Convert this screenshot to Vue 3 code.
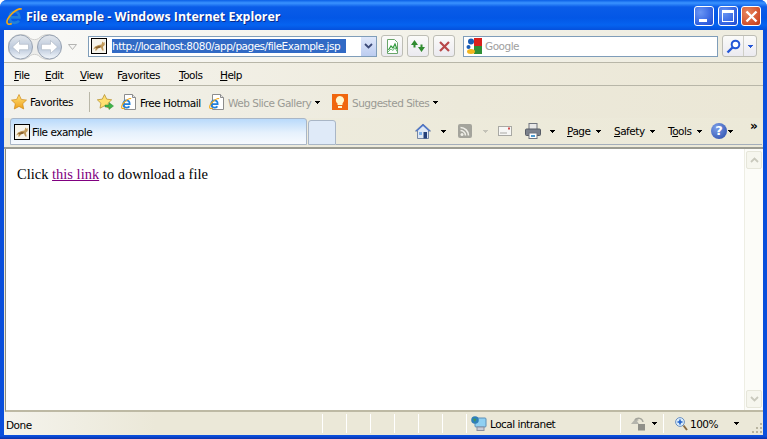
<script setup>
const menus = [
  { key: 'F', rest: 'ile', cls: 'm-file' },
  { key: 'E', rest: 'dit', cls: 'm-edit' },
  { key: 'V', rest: 'iew', cls: 'm-view' },
  { pre: 'F', key: 'a', rest: 'vorites', cls: 'm-fav' },
  { key: 'T', rest: 'ools', cls: 'm-tools' },
  { key: 'H', rest: 'elp', cls: 'm-help' }
];
const panes = [24, 24, 24, 24, 24, 24];
</script>

<template>
  <div class="window">
    <svg class="defs" width="0" height="0">
      <defs>
        <linearGradient id="orb" x1="0" y1="0" x2="0" y2="1">
          <stop offset="0" stop-color="#e4e8ed" />
          <stop offset="0.55" stop-color="#bcc9dc" />
          <stop offset="1" stop-color="#f4f8fc" />
        </linearGradient>
        <linearGradient id="starfill" x1="0" y1="0" x2="0" y2="1">
          <stop offset="0" stop-color="#ffe37a" />
          <stop offset="1" stop-color="#f0a019" />
        </linearGradient>
        <symbol id="ie" viewBox="0 0 16 16">
          <path d="M3 8.800h9.600c0-3.300-2-5.300-4.600-5.300S3.300 5.600 3.300 8.800s2 5.200 4.700 5.200c1.700 0 3.200-.6 4.300-1.800" fill="none" stroke="#1f7fdc" stroke-width="2.500" />
          <path d="M14.800 1.200C13 .2 9 2 5.600 5.400 2.200 8.800.2 12.800 1.400 14.600c.8 1 2.400.8 4-.1" fill="none" stroke="#f5a914" stroke-width="1.600" />
        </symbol>
        <symbol id="pageie" viewBox="0 0 16 16">
          <path d="M3.500.500h8l3 3v12h-11z" fill="#fff" stroke="#8c8c8c" />
          <path d="M11.500.500v3h3" fill="#e4e4e4" stroke="#8c8c8c" />
          <use href="#ie" x="0" y="4" width="11" height="11" />
        </symbol>
        <symbol id="cat" viewBox="0 0 16 16">
          <rect x="0.500" y="0.500" width="15" height="15" fill="#f6f3ea" stroke="#000" />
          <path d="M2 11.500l2-3 3.500-1.500 3-.5 .8-3 1.200 1.300 1.200-.8 0 3-1.800 1.700 .8 3.800h-1.500l-1.300-3-2.900.9-1.500 2.100H4l.8-2.300z" fill="#c19a5b" />
          <path d="M4 9.500l3.500-1.500 2.500.2-1 1.600-3.500.7z" fill="#8a6330" />
        </symbol>
        <symbol id="caret" viewBox="0 0 5 3">
          <path d="M0 0h5v1H4v1H3v1H2V2H1V1H0z" />
        </symbol>
      </defs>
    </svg>

    <header class="titlebar">
      <svg class="title-logo" width="17" height="17"><use href="#ie" /></svg>
      <span class="title-text">File example - Windows Internet Explorer</span>
      <div class="caption">
        <button class="cap cap-min"><i></i></button>
        <button class="cap cap-max"><i></i></button>
        <button class="cap cap-close">
          <svg width="13" height="13" viewBox="0 0 13 13"><path d="M1.500 1.500l10 10M11.500 1.500l-10 10" stroke="#fff" stroke-width="2.400" /></svg>
        </button>
      </div>
    </header>

    <div class="body">
      <div class="navbar">
        <div class="orbs">
          <svg width="56" height="28" viewBox="0 0 56 28">
            <path d="M12.500 1.500c5 0 8 2 10 4 2 1.500 6 1.500 8 0 2-2 5-4 10-4a12.500 12.500 0 0 1 0 25c-5 0-8-2-10-4-2-1.500-6-1.500-8 0-2 2-5 4-10 4a12.500 12.500 0 0 1 0-25z" fill="#ededeb" stroke="#d0d0ce" />
            <circle cx="12.500" cy="14" r="12" fill="url(#orb)" stroke="#97a2b2" />
            <circle cx="41.500" cy="14" r="12" fill="url(#orb)" stroke="#97a2b2" />
            <path d="M4.500 14l7-6.500v3.800H20.500v5.400h-9V20.500z" fill="#fff" stroke="#a8b2bf" stroke-width="0.600" />
            <path d="M49.500 14l-7-6.500v3.800H33.500v5.400h9V20.500z" fill="#fff" stroke="#a8b2bf" stroke-width="0.600" />
          </svg>
          <svg class="recent" width="9" height="6" viewBox="0 0 9 6"><path d="M.5.500h8L4.500 5.500z" fill="#f6f6f4" stroke="#b4b4b2" /></svg>
        </div>
        <div class="address">
          <svg class="fav16" width="16" height="16"><use href="#cat" /></svg>
          <span class="url">http://localhost:8080/app/pages/fileExample.jsp</span>
          <span class="addr-drop">
            <svg width="9" height="6" viewBox="0 0 9 6"><path d="M1 1l3.500 3.500L8 1" fill="none" stroke="#3c4a78" stroke-width="1.800" /></svg>
          </span>
        </div>
        <button class="tbtn b-compat">
          <svg width="15" height="15" viewBox="0 0 15 15">
            <path d="M2.500.500h7l3 3v11h-10z" fill="#fff" stroke="#6aa56a" />
            <path d="M3.500 11l2.500-4 2 2 2-4 2 5" fill="none" stroke="#2f9a3c" stroke-width="1.200" />
            <path d="M3 13l3-3 2 1.500 2-3 2 4" fill="none" stroke="#6fc07a" />
          </svg>
        </button>
        <button class="tbtn b-refresh">
          <svg width="16" height="14" viewBox="0 0 16 14">
            <path d="M1 6l3.500-5L8 6H5.500v2.500h-2V6z" fill="#2f8b2f" />
            <path d="M15 8l-3.500 5L8 8h2.500V5.500h2V8z" fill="#2f8b2f" />
          </svg>
        </button>
        <button class="tbtn b-stop">
          <svg width="11" height="11" viewBox="0 0 11 11"><path d="M1 1l9 9M10 1l-9 9" stroke="#b8484a" stroke-width="2.200" /></svg>
        </button>
        <div class="searchbox">
          <svg class="g-logo" width="16" height="16" viewBox="0 0 16 16">
            <path d="M8 0h8v8H8z" fill="#d8201c" />
            <path d="M8 8h8v8H8z" fill="#2f8f35" />
            <circle cx="5" cy="3.500" r="3" fill="#1a5cb4" />
            <circle cx="2.500" cy="9" r="2" fill="#1a5cb4" />
            <ellipse cx="5" cy="13.500" rx="4" ry="2.500" fill="#f2b51e" />
          </svg>
          <span class="google">Google</span>
        </div>
        <div class="searchbtn">
          <span class="s-go">
            <svg width="15" height="15" viewBox="0 0 15 15">
              <circle cx="9.500" cy="5.500" r="3.800" fill="#fff" stroke="#2456d6" stroke-width="2" />
              <path d="M6.500 8.500L1.500 13.500" stroke="#2456d6" stroke-width="2.400" />
            </svg>
          </span>
          <span class="s-drop">
            <svg width="5" height="3" fill="#2456d6"><use href="#caret" /></svg>
          </span>
        </div>
      </div>

      <nav class="menubar">
        <span v-for="m in menus" :key="m.cls" class="menu-item" :class="m.cls">{{ m.pre }}<u>{{ m.key }}</u>{{ m.rest }}</span>
      </nav>

      <div class="favbar">
        <svg class="star" width="16" height="16" viewBox="0 0 16 16"><path d="M8 .500l2.300 4.900 5.200.700-3.800 3.600 1 5.300L8 12.400l-4.700 2.600 1-5.300L.500 6.100l5.200-.700z" fill="url(#starfill)" stroke="#d08a18" stroke-width="0.700" /></svg>
        <span class="fav-label">Favorites</span>
        <span class="fav-sep"></span>
        <svg class="star-add" width="17" height="16" viewBox="0 0 17 16">
          <path d="M7.500.500l2.200 4.600 5 .700-3.600 3.400 .9 5L7.500 11.800 3 14.200l.9-5L.300 5.800l5-.700z" fill="#ffe070" stroke="#b0892a" stroke-width="0.700" />
          <path d="M8 11h4V8.500l4.500 3.500-4.500 3.500V13H8z" fill="#3fb44a" stroke="#2b8a33" stroke-width="0.500" />
        </svg>
        <svg class="page-1" width="16" height="16"><use href="#pageie" /></svg>
        <span class="link-hotmail">Free Hotmail</span>
        <svg class="page-2" width="16" height="16"><use href="#pageie" /></svg>
        <span class="link-gray link-slice">Web Slice Gallery</span>
        <svg width="5" height="3"><use href="#caret" /></svg>
        <svg class="bulb" width="16" height="16" viewBox="0 0 16 16">
          <rect width="16" height="16" fill="#f0660e" />
          <path d="M8 2a4.200 4.200 0 0 1 2.500 7.500V11h-5V9.500A4.200 4.200 0 0 1 8 2z" fill="#fff6cf" />
          <rect x="6" y="12" width="4" height="2" fill="#fff6cf" />
        </svg>
        <span class="link-gray link-sites">Suggested Sites</span>
        <svg width="5" height="3"><use href="#caret" /></svg>
      </div>

      <div class="tabrow">
        <div class="tab">
          <svg width="16" height="16"><use href="#cat" /></svg>
          <span>File example</span>
        </div>
        <div class="newtab"></div>
        <div class="cmdbar">
          <svg class="c-home" width="16" height="16" viewBox="0 0 16 16">
            <path d="M8 1L.500 8h2v7.500h11V8h2z" fill="#dfe8f4" stroke="#5a6f96" stroke-width="0.800" />
            <path d="M8 1L.500 8h2L8 3l5.500 5h2z" fill="#4c74c8" />
            <rect x="8.500" y="9" width="3.500" height="6.500" fill="#24407a" />
            <rect x="4" y="9" width="3" height="3" fill="#7fb0ea" />
          </svg>
          <svg class="caret-home" width="5" height="3"><use href="#caret" /></svg>
          <svg class="c-rss" width="14" height="14" viewBox="0 0 14 14">
            <rect width="14" height="14" rx="2" fill="#a4a49c" />
            <circle cx="4" cy="10.500" r="1.500" fill="#efefe8" />
            <path d="M2.500 6.500a5 5 0 0 1 5 5M2.500 3.500a8 8 0 0 1 8 8" fill="none" stroke="#efefe8" stroke-width="1.600" />
          </svg>
          <svg class="caret-rss" width="5" height="3" fill="#c4c3b8"><use href="#caret" /></svg>
          <svg class="c-mail" width="14" height="10" viewBox="0 0 14 10">
            <rect x="0.500" y="0.500" width="13" height="9" fill="#f6f6f4" stroke="#a9a9a4" />
            <path d="M2 7h7" stroke="#a9a9a4" />
            <rect x="10" y="1.500" width="2" height="2" fill="#d24a4a" />
          </svg>
          <svg class="c-print" width="16" height="16" viewBox="0 0 16 16">
            <rect x="4" y="0.500" width="8" height="6" fill="#e8e8e8" stroke="#70757e" />
            <rect x="0.500" y="6" width="15" height="6.500" rx="1" fill="#7b818c" stroke="#575c66" />
            <rect x="4" y="10" width="8" height="5.500" fill="#fff" stroke="#70757e" />
            <rect x="6" y="12" width="4" height="2" fill="#4c9ad0" />
          </svg>
          <svg class="caret-print" width="5" height="3"><use href="#caret" /></svg>
          <span class="cmd c-page"><u>P</u>age</span>
          <svg width="5" height="3"><use href="#caret" /></svg>
          <span class="cmd c-safety"><u>S</u>afety</span>
          <svg width="5" height="3"><use href="#caret" /></svg>
          <span class="cmd c-tools">T<u>o</u>ols</span>
          <svg width="5" height="3"><use href="#caret" /></svg>
          <span class="c-help">?</span>
          <svg class="caret-help" width="5" height="3"><use href="#caret" /></svg>
          <span class="chevrons">»</span>
        </div>
      </div>

      <main class="viewport">
        <div class="page">
          <p>Click <a href="#">this link</a> to download a file</p>
        </div>
        <div class="scrollbar">
          <span class="sb-btn">
            <svg width="9" height="6" viewBox="0 0 9 6"><path d="M1 5l3.500-3.500L8 5" fill="none" stroke="#c9c9bd" stroke-width="1.800" /></svg>
          </span>
          <span class="sb-btn">
            <svg width="9" height="6" viewBox="0 0 9 6"><path d="M1 1l3.500 3.500L8 1" fill="none" stroke="#c9c9bd" stroke-width="1.800" /></svg>
          </span>
        </div>
      </main>

      <footer class="status">
        <span class="st-done">Done</span>
        <span v-for="(w, i) in panes" :key="i" class="st-pane" :style="{ width: w + 'px' }"></span>
        <div class="st-zone">
          <svg width="16" height="16" viewBox="0 0 16 16">
            <rect x="4" y="2" width="11" height="9" rx="1" fill="#8fd0f2" stroke="#5c90b8" />
            <rect x="6" y="11" width="7" height="3.500" fill="#c8ccd6" stroke="#8a90a0" />
            <circle cx="4" cy="4" r="3.800" fill="#2f7fb8" />
            <path d="M2 2.500l3 .5-1 3z" fill="#43a045" />
          </svg>
          <span>Local intranet</span>
        </div>
        <div class="st-sec">
          <svg width="16" height="15" viewBox="0 0 16 15">
            <path d="M1 8l5-6 3 2-2 1 2 3z" fill="#b5b5ad" />
            <path d="M5 4a4.500 4.500 0 0 1 8 2" fill="none" stroke="#a5a59c" stroke-width="1.500" />
            <rect x="8" y="8" width="7" height="6.500" fill="#8f8f88" />
          </svg>
          <svg class="caret-sec" width="5" height="3"><use href="#caret" /></svg>
        </div>
        <div class="st-zoom">
          <svg width="13" height="14" viewBox="0 0 13 14">
            <circle cx="5" cy="5" r="4.400" fill="#d9ecfb" stroke="#6b8fc0" />
            <path d="M5 2.500v5M2.500 5h5" stroke="#1f5fc8" stroke-width="1.600" />
            <path d="M8.500 8.500l3.500 4.500" stroke="#8a6a40" stroke-width="2" />
          </svg>
          <span class="zoom-val">100%</span>
          <svg width="5" height="3"><use href="#caret" /></svg>
        </div>
        <svg class="grip" width="12" height="12" viewBox="0 0 12 12" fill="#b8b4a0">
          <rect x="9" y="1" width="2" height="2" />
          <rect x="5" y="5" width="2" height="2" />
          <rect x="9" y="5" width="2" height="2" />
          <rect x="1" y="9" width="2" height="2" />
          <rect x="5" y="9" width="2" height="2" />
          <rect x="9" y="9" width="2" height="2" />
        </svg>
      </footer>
    </div>
  </div>
</template>

<style>
html, body {
  margin: 0;
  background: #fff;
  overflow: hidden;
}
</style>

<style scoped>
.window {
  width: 767px;
  height: 439px;
  display: flex;
  flex-direction: column;
  font-family: "DejaVu Sans", sans-serif;
  font-size: 10.5px;
  letter-spacing: -0.5px;
  color: #000;
  background: linear-gradient(#0a4fdc 0, #0a4fdc 436px, #0a2fa8 439px);
  border-radius: 7px 7px 0 0;
  overflow: hidden;
}

.defs {
  display: block;
  flex: none;
}

.titlebar {
  height: 30px;
  flex: none;
  display: flex;
  align-items: center;
  background: linear-gradient(#0a5fe6 0, #3a93ff 3px, #0a5ce8 7px, #0357e6 18px, #0563f0 25px, #0450dc 30px);
}

.title-logo {
  margin-left: 6px;
  margin-top: 2px;
  flex: none;
}

.title-text {
  margin-left: 3px;
  margin-top: 2px;
  font-family: "Open Sans", sans-serif;
  font-weight: 700;
  font-size: 12.4px;
  letter-spacing: 0;
  color: #fff;
  text-shadow: 1px 1px 0 #0a2c8c;
}

.caption {
  margin-left: auto;
  margin-right: 6px;
  margin-top: 2px;
  display: flex;
  gap: 3.5px;
}

.cap {
  width: 20px;
  height: 20px;
  padding: 0;
  border: 1px solid #fff;
  border-radius: 3px;
  display: flex;
  background: radial-gradient(circle at 30% 30%, #6a96f4, #2f5fe0 70%, #2148cc);
}

.cap-min i {
  width: 8px;
  height: 3px;
  margin: 12px 0 0 4px;
  background: #fff;
}

.cap-max i {
  width: 12px;
  height: 12px;
  margin: 3px 0 0 3px;
  border: 1px solid #fff;
  border-top-width: 3px;
  box-sizing: border-box;
}

.cap-close {
  align-items: center;
  justify-content: center;
  background: radial-gradient(circle at 30% 30%, #e8865e, #d2502c 70%, #b83a18);
}

.body {
  flex: 1;
  margin: 0 4px 4px;
  display: flex;
  flex-direction: column;
  min-height: 0;
  background: #ece9d8;
}

.navbar {
  height: 32px;
  flex: none;
  display: flex;
  align-items: center;
  border-bottom: 1px solid #b8b6a8;
  background: linear-gradient(90deg, #f9f9f7, #f3f2ea 50%, #eeecdf);
}

.orbs {
  display: flex;
  align-items: center;
  margin-left: 4px;
  margin-top: 1px;
}

.recent {
  margin-left: 4px;
}

.address {
  width: 289px;
  height: 21px;
  margin-left: 11px;
  display: flex;
  align-items: center;
  border: 1px solid #7f9db9;
  background: #fff;
  box-sizing: border-box;
}

.fav16 {
  margin-left: 2px;
  flex: none;
}

.url {
  margin-left: 5px;
  height: 14px;
  line-height: 14px;
  flex: none;
  width: 234px;
  white-space: nowrap;
  color: #fff;
  background: #316ac5;
}

.addr-drop {
  margin-left: auto;
  width: 15px;
  height: 19px;
  display: flex;
  align-items: center;
  justify-content: center;
  background: linear-gradient(#dfe8fa, #bcccf0);
}

.tbtn,
.searchbtn {
  height: 22px;
  display: flex;
  align-items: center;
  border: 1px solid #bdbdb5;
  border-radius: 3px;
  background: linear-gradient(#fbfbf9, #ebeaf0);
  box-sizing: border-box;
}

.tbtn {
  width: 22px;
  padding: 0;
  margin-left: 4px;
  justify-content: center;
}

.searchbox {
  width: 255px;
  height: 21px;
  margin-left: 8px;
  display: flex;
  align-items: center;
  border: 1px solid #7f9db9;
  background: #fff;
  box-sizing: border-box;
}

.g-logo {
  margin-left: 2px;
}

.google {
  margin-left: 3px;
  color: #a0a0a0;
}

.searchbtn {
  margin-left: 4px;
  width: 35px;
  overflow: hidden;
}

.s-go {
  width: 21px;
  height: 100%;
  display: flex;
  align-items: center;
  justify-content: center;
  border-right: 1px solid #cfcfc8;
  box-sizing: border-box;
}

.s-drop {
  flex: 1;
  display: flex;
  justify-content: center;
}

.menubar {
  height: 22px;
  flex: none;
  display: flex;
  align-items: center;
  border-bottom: 1px solid #b8b6a8;
  background: linear-gradient(90deg, #f5f4ee, #efecdf 50%, #ebe7d6);
}

.menu-item {
  display: block;
  margin-top: 2px;
}

.m-file { margin-left: 10px; width: 31px; }
.m-edit { width: 35px; }
.m-view { width: 37px; }
.m-fav { width: 62px; }
.m-tools { width: 41px; }

.favbar {
  height: 32px;
  flex: none;
  display: flex;
  align-items: center;
  background: linear-gradient(90deg, #f3f2ec, #ece9da 60%, #ebe7d6);
}

.star { margin-left: 7px; }
.fav-label { margin-left: 3px; width: 48px; white-space: nowrap; }
.fav-sep { width: 1px; height: 20px; margin-left: 11px; background: #b9b7a8; }
.star-add { margin-left: 7px; }
.page-1 { margin-left: 7px; }
.link-hotmail { margin-left: 3px; width: 65px; white-space: nowrap; margin-top: 2px; }
.page-2 { margin-left: 4px; }
.link-gray { color: #9a9a94; white-space: nowrap; margin-top: 2px; }
.link-slice { margin-left: 3px; width: 87px; }
.bulb { margin-left: 12px; }
.link-sites { margin-left: 4px; width: 81px; }

.tabrow {
  height: 31px;
  flex: none;
  display: flex;
  align-items: flex-start;
  border-bottom: 2px solid #9c9c92;
  box-sizing: border-box;
  background: linear-gradient(90deg, #eeecdf, #ece9d8);
}

.tab {
  width: 297px;
  height: 27px;
  margin-left: 6px;
  display: flex;
  align-items: center;
  gap: 2px;
  padding-left: 3px;
  box-sizing: border-box;
  border: 1px solid #a9b6c6;
  border-radius: 3px 3px 0 0;
  background: linear-gradient(#b9dafb, #e6f1fc 55%, #f7fafe);
}

.newtab {
  width: 28px;
  height: 25px;
  margin-top: 2px;
  margin-left: 1px;
  border: 1px solid #a9b6c6;
  border-radius: 3px 3px 0 0;
  background: #dfeaf8;
  box-sizing: border-box;
}

.cmdbar {
  flex: 1;
  height: 27px;
  display: flex;
  align-items: center;
  border-bottom: 1px solid #a4aeba;
  box-sizing: border-box;
  margin-right: 1px;
}

.c-home { margin-left: 79px; }
.caret-home { margin-left: 10px; }
.c-rss { margin-left: 12px; }
.caret-rss { margin-left: 11px; }
.c-mail { margin-left: 10px; }
.c-print { margin-left: 13px; }
.caret-print { margin-left: 9px; }
.cmd { white-space: nowrap; }
.c-page { margin-left: 12px; width: 29px; }
.c-safety { margin-left: 13px; width: 36px; }
.c-tools { margin-left: 13px; width: 29px; }

.c-help {
  width: 16px;
  height: 16px;
  margin-left: 9px;
  border-radius: 50%;
  text-align: center;
  line-height: 16px;
  font-weight: 700;
  font-size: 13px;
  letter-spacing: 0;
  color: #fff;
  background: radial-gradient(circle at 35% 30%, #7d9fe8, #2548a8);
}

.caret-help { margin-left: 1px; }

.chevrons {
  margin-left: 17px;
  margin-top: -11px;
  font-size: 12px;
  font-weight: 700;
}

.viewport {
  flex: 1;
  min-height: 0;
  display: flex;
  margin-left: 1px;
  border-left: 1px solid #8a8a80;
  border-bottom: 2px solid #bdb9a4;
  background: #fff;
}

.page {
  flex: 1;
  font-family: "Liberation Serif", serif;
  font-size: 14.5px;
  letter-spacing: 0;
}

.page p {
  margin: 17px 0 0 11px;
}

.page a {
  color: #800080;
}

.scrollbar {
  width: 19px;
  display: flex;
  flex-direction: column;
  justify-content: space-between;
  background: #fcfcf8;
  border-left: 1px solid #eeeee4;
  box-sizing: border-box;
}

.sb-btn {
  height: 16px;
  margin: 2px 1px;
  display: flex;
  align-items: center;
  justify-content: center;
  border: 1px solid #e6e6da;
  border-radius: 2px;
  background: #f6f6ee;
}

.status {
  height: 23px;
  flex: none;
  display: flex;
  align-items: center;
  background: linear-gradient(90deg, #f4f3ec, #ebe8d8 20%);
}

.status > * {
  flex: none;
}

.st-done {
  width: 318px;
  padding-left: 2px;
  box-sizing: border-box;
  margin-top: 2px;
}

.st-pane,
.st-zone,
.st-sec,
.st-zoom {
  height: 19px;
  display: flex;
  align-items: center;
  box-sizing: border-box;
  border-left: 1px solid #fff;
}

.st-zone {
  width: 154px;
  padding-left: 4px;
  gap: 3px;
}

.st-sec {
  width: 43px;
  padding-left: 9px;
}

.caret-sec {
  margin-left: 6px;
}

.st-zoom {
  width: 86px;
  padding-left: 11px;
}

.zoom-val {
  margin-left: 2px;
  width: 44px;
}

.grip {
  margin-top: 8px;
  margin-left: 2px;
}
</style>
